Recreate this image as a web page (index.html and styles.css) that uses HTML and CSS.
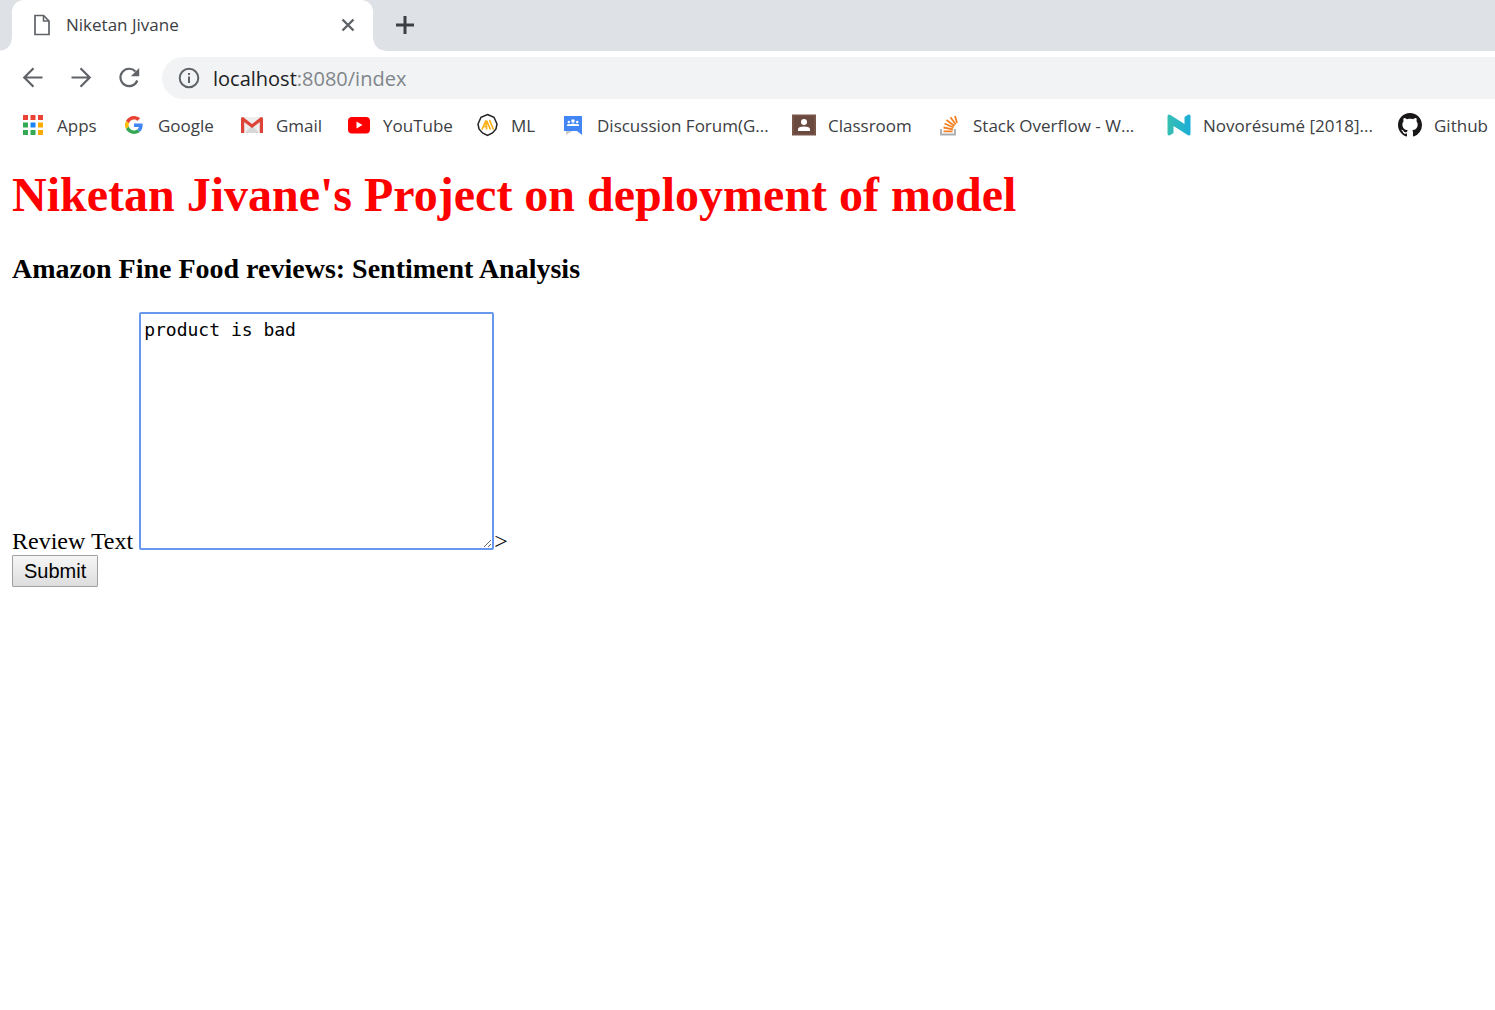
FILE: index.html
```html
<!DOCTYPE html>
<html lang="en">
<head>
<meta charset="utf-8">
<meta name="viewport" content="width=device-width, initial-scale=1">
<title>Niketan Jivane</title>
<link rel="stylesheet" href="styles.css">
</head>
<body>
<header class="browser">
  <div class="tabstrip">
    <div class="tab">
      <svg class="tab-icon" width="18" height="22" viewBox="0 0 18 22" fill="none" stroke="#5f6368" stroke-width="1.700"><path d="M2 1.500H10.500L16 7V20.500H2Z"/><path d="M10.500 1.500V7H16" stroke-width="1.500"/></svg>
      <span class="tab-title">Niketan Jivane</span>
      <button class="icon-button tab-close" type="button" aria-label="Close tab"><svg width="14" height="14" viewBox="0 0 14 14" stroke="#5f6368" stroke-width="2.400"><path d="M1.500 1.500L12.500 12.500M12.500 1.500L1.500 12.500"/></svg></button>
    </div>
    <button class="icon-button new-tab" type="button" aria-label="New tab"><svg width="18" height="18" viewBox="0 0 18 18" stroke="#3c4043" stroke-width="3"><path d="M9 0V18M0 9H18"/></svg></button>
  </div>
  <div class="toolbar">
    <button class="icon-button" type="button" aria-label="Back"><svg width="24" height="24" viewBox="0 0 24 24" fill="none" stroke="#5f6368" stroke-width="2.200"><path d="M21.500 11.500H3.500M12.500 2.300L3.300 11.500L12.500 20.700"/></svg></button>
    <button class="icon-button" type="button" aria-label="Forward"><svg width="24" height="24" viewBox="0 0 24 24" fill="none" stroke="#5f6368" stroke-width="2.200"><path d="M2.500 11.500H20.500M11.500 2.300L20.700 11.500L11.500 20.700"/></svg></button>
    <button class="icon-button" type="button" aria-label="Reload"><svg width="24" height="24" viewBox="0 0 24 24"><path d="M18.500 5.500A8.700 8.700 0 1 0 20.300 14.500" fill="none" stroke="#5f6368" stroke-width="2.200"/><path d="M22.200 2V10.300H13.900Z" fill="#5f6368"/></svg></button>
    <div class="omnibox">
      <svg class="info" width="22" height="22" viewBox="0 0 22 22"><circle cx="11" cy="11" r="9.300" fill="none" stroke="#5f6368" stroke-width="2"/><path d="M10 9.500H12V16H10ZM10 6H12V8H10Z" fill="#5f6368"/></svg>
      <label class="host" for="address">localhost</label><input class="address" id="address" type="text" value=":8080/index" spellcheck="false">
    </div>
  </div>
  <nav class="bookmarks" aria-label="Bookmarks">
    <a class="bookmark" href="#"><svg width="24" height="24" viewBox="0 0 24 24"><path d="M2 2h5v5h-5zM9.500 2h5v5h-5zM17 2h5v5h-5z" fill="#ea4335"/><path d="M2 9.500h5v5h-5zM2 17h5v5h-5zM9.500 17h5v5h-5z" fill="#34a853"/><path d="M9.500 9.500h5v5h-5z" fill="#1a84f5"/><path d="M17 9.500h5v5h-5zM17 17h5v5h-5z" fill="#f9ab00"/></svg><span>Apps</span></a>
    <a class="bookmark" href="#"><svg width="24" height="24" viewBox="-8 -8 64 64"><path fill="#EA4335" d="M24 9.500c3.540 0 6.710 1.220 9.210 3.600l6.850-6.850C35.900 2.380 30.470 0 24 0 14.620 0 6.510 5.380 2.560 13.220l7.980 6.190C12.430 13.720 17.740 9.500 24 9.500z"/><path fill="#4285F4" d="M46.980 24.550c0-1.570-.15-3.090-.38-4.550H24v9.020h12.940c-.58 2.960-2.260 5.480-4.780 7.180l7.730 6c4.510-4.180 7.090-10.360 7.090-17.650z"/><path fill="#FBBC05" d="M10.530 28.590c-.48-1.450-.76-2.990-.76-4.590s.27-3.140.76-4.590l-7.980-6.190C.92 16.460 0 20.120 0 24c0 3.880.92 7.540 2.560 10.780l7.970-6.190z"/><path fill="#34A853" d="M24 48c6.480 0 11.930-2.130 15.890-5.810l-7.730-6c-2.150 1.450-4.920 2.300-8.160 2.300-6.260 0-11.570-4.220-13.470-9.910l-7.980 6.190C6.510 42.620 14.620 48 24 48z"/></svg><span>Google</span></a>
    <a class="bookmark" href="#"><svg width="24" height="24" viewBox="0 0 24 24"><path d="M1 4H23V20H1Z" fill="#eee"/><path d="M5 20L12 12L19 20Z" fill="#d8d8d8"/><path d="M1 5.500Q1 4 3 4L12 11L21 4Q23 4 23 5.500V20H19.800V9L12 15L4.200 9V20H1Z" fill="#db4437"/></svg><span>Gmail</span></a>
    <a class="bookmark" href="#"><svg width="24" height="24" viewBox="0 0 24 24"><rect x="1" y="4" width="22" height="16.500" rx="4" fill="#f00"/><path d="M9.500 8.500V15.500L15.500 12Z" fill="#fff"/></svg><span>YouTube</span></a>
    <a class="bookmark" href="#"><svg width="24" height="24" viewBox="0 0 24 24" fill="none"><path d="M12.500 1.500L19 4.300L22 11L21 16L17.500 20L12.500 22.500L7.500 20L4 16L3 11L6 4.300Z" stroke="#222" stroke-width="1.500"/><path d="M7 16.500L11 7.500L11.700 16.500M8.500 13.500H11.500M11.500 7.500L15.500 16.500M14.500 7L18.500 16.500" stroke="#fbb017" stroke-width="1.700"/></svg><span>ML</span></a>
    <a class="bookmark" href="#"><svg width="24" height="24" viewBox="0 0 24 24"><path d="M5 17H13L5 22Z" fill="#ccc"/><path d="M3 3H21V22L16 18H3Z" fill="#4285f4"/><circle cx="12" cy="8" r="1.800" fill="#fff"/><circle cx="7.800" cy="9" r="1.200" fill="#fff"/><circle cx="16.200" cy="9" r="1.200" fill="#fff"/><path d="M6 13V11.500Q7.800 10.500 9.300 11.200Q12 9.600 14.700 11.200Q16.200 10.500 18 11.500V13Z" fill="#fff"/></svg><span>Discussion Forum(G...</span></a>
    <a class="bookmark" href="#"><svg width="24" height="24" viewBox="0 0 24 24"><path d="M0 1.500H24V22.500H0Z" fill="#795548"/><path d="M2 3H22V21H2Z" fill="#6b4b40"/><circle cx="12" cy="9" r="3" fill="#fff"/><path d="M6 18V15.500Q7 13.500 12 13.500Q17 13.500 18 15.500V18Z" fill="#fff"/></svg><span>Classroom</span></a>
    <a class="bookmark" href="#"><svg width="24" height="24" viewBox="0 0 24 24" fill="none"><path d="M4 16V21.500H18V16" stroke="#a9adb0" stroke-width="1.800"/><path d="M6.500 18.300H15.500M6.500 14.500L16 16.300M7.500 10.500L16.500 14.500M9.500 7L17.500 13M13.500 4.200L18.700 11.500M18 3L20 10" stroke="#f48024" stroke-width="1.800"/></svg><span>Stack Overflow - W...</span></a>
    <a class="bookmark" href="#"><svg width="24" height="24" viewBox="0 0 24 24"><defs><linearGradient id="teal"><stop stop-color="#36bfb2"/><stop offset="1" stop-color="#1badd8"/></linearGradient></defs><path d="M.500 3.500Q.500 1 3 1.700L17.500 11V4L21 1.800Q23.500 1 23.500 3.500V20.500Q23.500 23 21 22.300L6.500 13V20L3 22.200Q.500 23 .500 20.500Z" fill="url(#teal)"/></svg><span>Novorésumé [2018]...</span></a>
    <a class="bookmark" href="#"><svg width="24" height="24" viewBox="0 0 16 16"><path fill="#191717" d="M8 0C3.580 0 0 3.580 0 8c0 3.540 2.290 6.530 5.470 7.590.4.070.55-.17.55-.38 0-.19-.01-.82-.01-1.490-2.010.37-2.530-.49-2.690-.94-.09-.23-.48-.94-.82-1.130-.28-.15-.68-.52-.01-.53.63-.01 1.080.58 1.230.82.72 1.210 1.870.87 2.330.66.07-.52.28-.87.51-1.070-1.780-.2-3.640-.89-3.640-3.950 0-.87.31-1.590.82-2.150-.08-.2-.36-1.020.08-2.120 0 0 .67-.21 2.200.82.64-.18 1.320-.27 2-.27s1.360.09 2 .27c1.530-1.040 2.200-.82 2.200-.82.44 1.100.16 1.920.08 2.120.51.56.82 1.270.82 2.150 0 3.070-1.870 3.750-3.650 3.950.29.25.54.73.54 1.480 0 1.070-.01 1.930-.01 2.200 0 .21.15.46.55.38A8.010 8.010 0 0 0 16 8c0-4.420-3.580-8-8-8z"/></svg><span>Github</span></a>
  </nav>
</header>
<main class="page">
  <h1 class="title">Niketan Jivane's Project on deployment of model</h1>
  <h3 class="subtitle">Amazon Fine Food reviews: Sentiment Analysis</h3>
  <form class="review-form">
    <label for="review">Review Text</label>
    <textarea class="review" id="review" spellcheck="false">product is bad</textarea>&gt;<br>
    <button class="submit" type="submit">Submit</button>
  </form>
</main>
</body>
</html>
```
FILE: styles.css
```css
* {
  box-sizing: border-box;
}

body {
  margin: 0;
  background: #fff;
  color: #000;
  font-family: "Liberation Serif", "Times New Roman", serif;
  font-size: 24px;
  overflow-x: hidden;
}

.browser {
  font-family: "Open Sans", "Noto Sans", sans-serif;
  color: #3c4043;
}

.icon-button {
  display: flex;
  align-items: center;
  justify-content: center;
  flex: none;
  width: 24px;
  height: 24px;
  padding: 0;
  border: 0;
  background: none;
}

/* Tabs */
.tabstrip {
  display: flex;
  align-items: center;
  height: 51px;
  padding-left: 12px;
  background: #dee1e6;
}

.tab {
  position: relative;
  display: flex;
  align-items: center;
  width: 361px;
  height: 100%;
  padding: 0 13px 2px 21px;
  border-radius: 12px 12px 0 0;
  background: #fff;
}

.tab::before,
.tab::after {
  content: "";
  position: absolute;
  bottom: 0;
  width: 12px;
  height: 12px;
}

.tab::before {
  right: 100%;
  background: radial-gradient(circle at 0 0, #dee1e6 11px, #fff 12px);
}

.tab::after {
  left: 100%;
  background: radial-gradient(circle at 100% 0, #dee1e6 11px, #fff 12px);
}

.tab-title {
  flex: 1;
  margin-left: 15px;
  font-size: 17px;
}

.new-tab {
  margin: 0 0 2px 20px;
}

/* Toolbar */
.toolbar {
  display: flex;
  align-items: center;
  gap: 24px;
  height: 54px;
  padding-left: 21px;
}

.omnibox {
  display: flex;
  align-items: center;
  flex: 1;
  height: 42px;
  margin-left: -3px;
  padding-left: 16px;
  border-radius: 21px 0 0 21px;
  background: #f1f3f4;
  font-size: 20px;
}

.host {
  margin-left: 13px;
  color: #202124;
}

.address {
  flex: 1;
  min-width: 0;
  padding: 0;
  border: 0;
  outline: 0;
  background: none;
  color: #80868b;
  font: inherit;
}

/* Bookmarks */
.bookmarks {
  display: grid;
  grid-template-columns: 101px 118px 107px 128px 86px 231px 145px 230px 231px auto;
  align-items: center;
  height: 40px;
  padding-left: 21px;
}

.bookmark {
  display: flex;
  align-items: center;
  gap: 12px;
  color: inherit;
  font-size: 17px;
  text-decoration: none;
  white-space: nowrap;
}

/* Page */
.page {
  padding: 22px 12px;
}

.title {
  margin: 0 0 31px;
  color: #f00;
  font-size: 48px;
  line-height: 55px;
}

.subtitle {
  margin: 0 0 27px;
  font-size: 28px;
  line-height: 32px;
}

.review {
  width: 355px;
  height: 238px;
  padding: 4px 3px;
  border: 2px solid #6699ee;
  border-radius: 2px;
  outline: 0;
  background: #fff;
  color: #000;
  font-family: "DejaVu Sans Mono", monospace;
  font-size: 18px;
  line-height: 24px;
  vertical-align: -1px;
}

.submit {
  height: 32px;
  padding: 0 11px;
  border: 1px solid #a0a0a0;
  border-radius: 1px;
  background: linear-gradient(#f6f6f6, #dddddd);
  color: #000;
  font-family: "Liberation Sans", Arial, sans-serif;
  font-size: 20px;
}
```
